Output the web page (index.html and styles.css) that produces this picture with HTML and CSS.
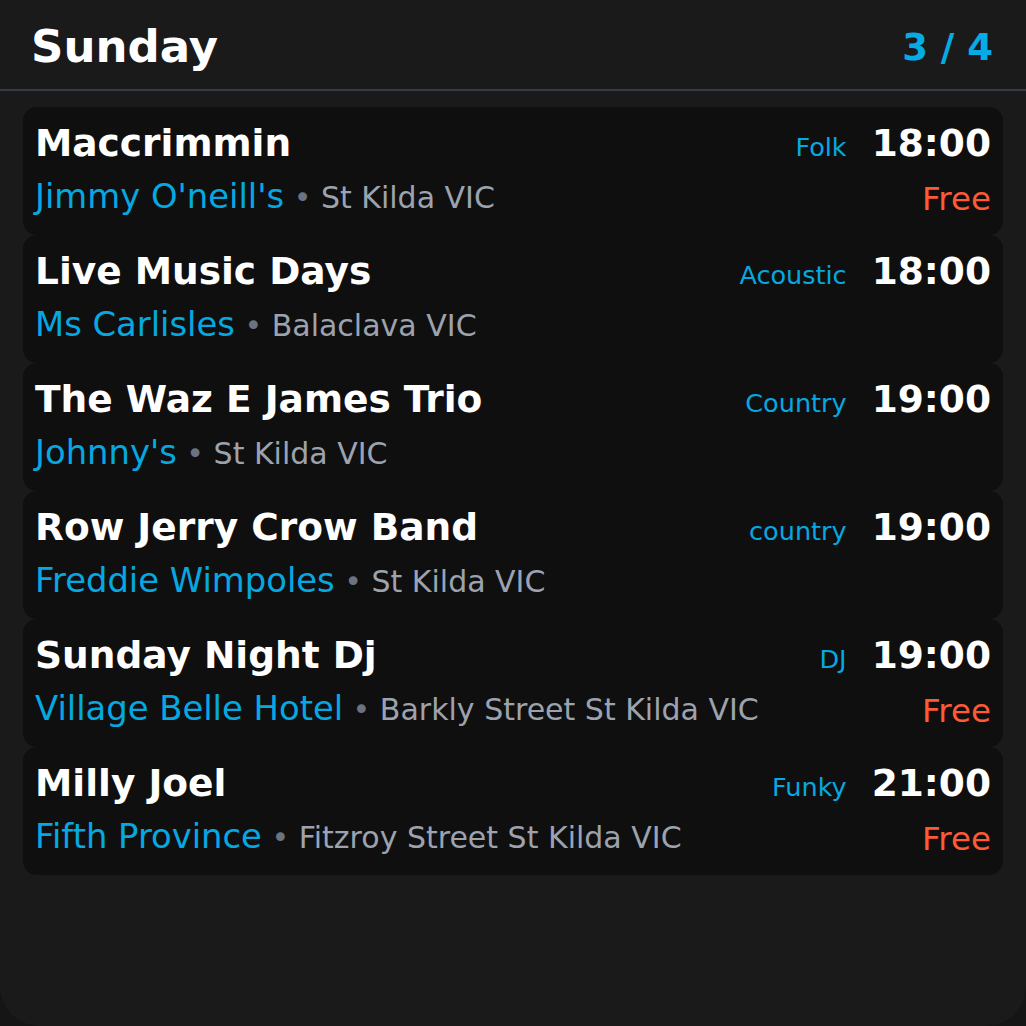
FILE: index.html
```html
<!DOCTYPE html>
<html>
<head>
<meta charset="utf-8">
<link rel="stylesheet" href="styles.css">
</head>
<body>
<div class="app">
  <header class="header">
    <h1 class="day">Sunday</h1>
    <div class="page">3 / 4</div>
  </header>
  <main class="list">
    <div class="card">
      <div class="row">
        <div class="title">Maccrimmin</div>
        <div class="right"><span class="genre">Folk</span><span class="time">18:00</span></div>
      </div>
      <div class="row">
        <div class="where"><span class="venue">Jimmy O'neill's</span><span class="sep"> • </span><span class="loc">St Kilda VIC</span></div>
        <div class="price">Free</div>
      </div>
    </div>
    <div class="card">
      <div class="row">
        <div class="title">Live Music Days</div>
        <div class="right"><span class="genre">Acoustic</span><span class="time">18:00</span></div>
      </div>
      <div class="row">
        <div class="where"><span class="venue">Ms Carlisles</span><span class="sep"> • </span><span class="loc">Balaclava VIC</span></div>
        <div class="price"></div>
      </div>
    </div>
    <div class="card">
      <div class="row">
        <div class="title">The Waz E James Trio</div>
        <div class="right"><span class="genre">Country</span><span class="time">19:00</span></div>
      </div>
      <div class="row">
        <div class="where"><span class="venue">Johnny's</span><span class="sep"> • </span><span class="loc">St Kilda VIC</span></div>
        <div class="price"></div>
      </div>
    </div>
    <div class="card">
      <div class="row">
        <div class="title">Row Jerry Crow Band</div>
        <div class="right"><span class="genre">country</span><span class="time">19:00</span></div>
      </div>
      <div class="row">
        <div class="where"><span class="venue">Freddie Wimpoles</span><span class="sep"> • </span><span class="loc">St Kilda VIC</span></div>
        <div class="price"></div>
      </div>
    </div>
    <div class="card">
      <div class="row">
        <div class="title">Sunday Night Dj</div>
        <div class="right"><span class="genre">DJ</span><span class="time">19:00</span></div>
      </div>
      <div class="row">
        <div class="where"><span class="venue">Village Belle Hotel</span><span class="sep"> • </span><span class="loc">Barkly Street St Kilda VIC</span></div>
        <div class="price">Free</div>
      </div>
    </div>
    <div class="card">
      <div class="row">
        <div class="title">Milly Joel</div>
        <div class="right"><span class="genre">Funky</span><span class="time">21:00</span></div>
      </div>
      <div class="row">
        <div class="where"><span class="venue">Fifth Province</span><span class="sep"> • </span><span class="loc">Fitzroy Street St Kilda VIC</span></div>
        <div class="price">Free</div>
      </div>
    </div>
  </main>
</div>
</body>
</html>
```
FILE: styles.css
```css
html, body {
  margin: 0;
  padding: 0;
  background: #151515;
}
body {
  font-family: "DejaVu Sans", sans-serif;
  color: #ffffff;
}
.app {
  height: 1026px;
  background: #1a1a1a;
  border-radius: 0 0 40px 40px;
  overflow: hidden;
}
.header {
  display: flex;
  justify-content: space-between;
  align-items: center;
  padding: 21px 33px 16px 31px;
  border-bottom: 2px solid #363c47;
}
.day {
  margin: 0;
  font-size: 45px;
  font-weight: bold;
  line-height: 52px;
}
.page {
  font-size: 37px;
  font-weight: bold;
  color: #05ace3;
}
.list {
  display: flex;
  flex-direction: column;
  padding: 16px 23px;
}
.card {
  background: #0f0f0f;
  border-radius: 14px;
  height: 128px;
  box-sizing: border-box;
  padding: 14px 12px 0 12px;
  display: flex;
  flex-direction: column;
  gap: 12px;
}
.row {
  display: flex;
  justify-content: space-between;
  align-items: baseline;
}
.title {
  font-size: 37.5px;
  font-weight: bold;
  line-height: 44px;
}
.right {
  display: flex;
  align-items: baseline;
  gap: 25px;
}
.genre {
  font-size: 25.5px;
  color: #05a8e0;
}
.time {
  font-size: 37.5px;
  font-weight: bold;
}
.where {
  line-height: 40px;
}
.venue {
  font-size: 33.8px;
  color: #05a8e0;
}
.sep {
  font-size: 30px;
  color: #6b7280;
}
.loc {
  font-size: 30px;
  color: #9ca3af;
}
.price {
  font-size: 32.5px;
  color: #ff5a36;
  position: relative;
  top: 2px;
}
```
